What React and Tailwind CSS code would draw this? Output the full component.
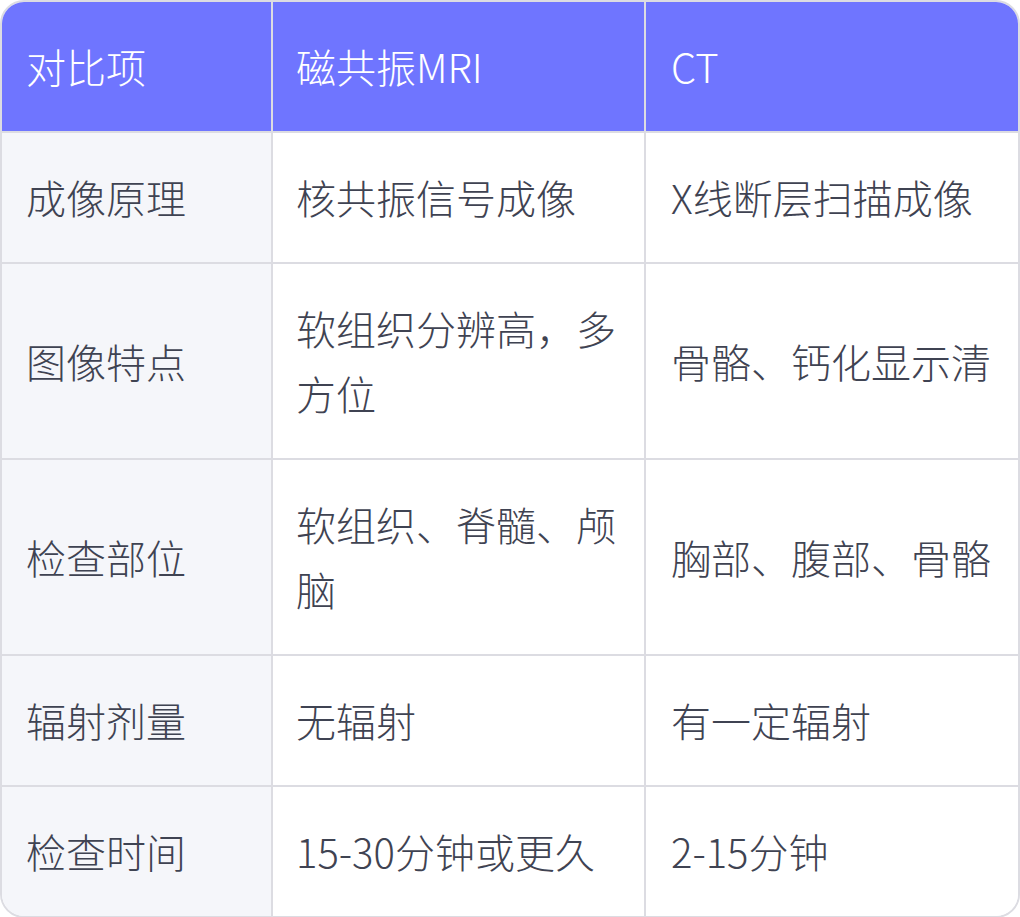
import React from 'react';

const rows = [
    ['成像原理', '核共振信号成像', 'X线断层扫描成像'],
    ['图像特点', '软组织分辨高，多方位', '骨骼、钙化显示清'],
    ['检查部位', '软组织、脊髓、颅脑', '胸部、腹部、骨骼'],
    ['辐射剂量', '无辐射', '有一定辐射'],
    ['检查时间', '15-30分钟或更久', '2-15分钟'],
];

const App = () => {
    return (
        <div
            className="w-[1020px] h-[917px] bg-white"
            style={{ fontFamily: '"Noto Sans CJK SC", "Noto Sans", sans-serif' }}
        >
            <div className="w-[1020px] border-2 border-[#dcdce2] rounded-3xl overflow-hidden">
                <table className="w-full table-fixed border-separate border-spacing-0 text-[40px] leading-[65px] font-light">
                    <colgroup>
                        <col className="w-[271px]" />
                        <col className="w-[373px]" />
                        <col />
                    </colgroup>
                    <thead>
                        <tr className="bg-[#6f75ff] text-white text-left">
                            <th className="font-light pl-[24px] pr-[20px] py-8 border-r-2 border-[#dcdce2]">对比项</th>
                            <th className="font-light pl-[23px] pr-[20px] py-8 border-r-2 border-[#dcdce2]">磁共振MRI</th>
                            <th className="font-light pl-[25px] pr-[20px] py-8">CT</th>
                        </tr>
                    </thead>
                    <tbody className="text-[#3f4352]">
                        {rows.map((row, i) => (
                            <tr key={i}>
                                <td className="bg-[#f5f6fa] pl-[24px] pr-[20px] py-8 border-t-2 border-r-2 border-[#dcdce2] align-middle">
                                    {row[0]}
                                </td>
                                <td className="bg-white pl-[23px] pr-[25px] py-8 border-t-2 border-r-2 border-[#dcdce2] align-middle">
                                    {row[1]}
                                </td>
                                <td className="bg-white pl-[25px] pr-[20px] py-8 border-t-2 border-[#dcdce2] align-middle">
                                    {row[2]}
                                </td>
                            </tr>
                        ))}
                    </tbody>
                </table>
            </div>
        </div>
    );
};

export default App;
